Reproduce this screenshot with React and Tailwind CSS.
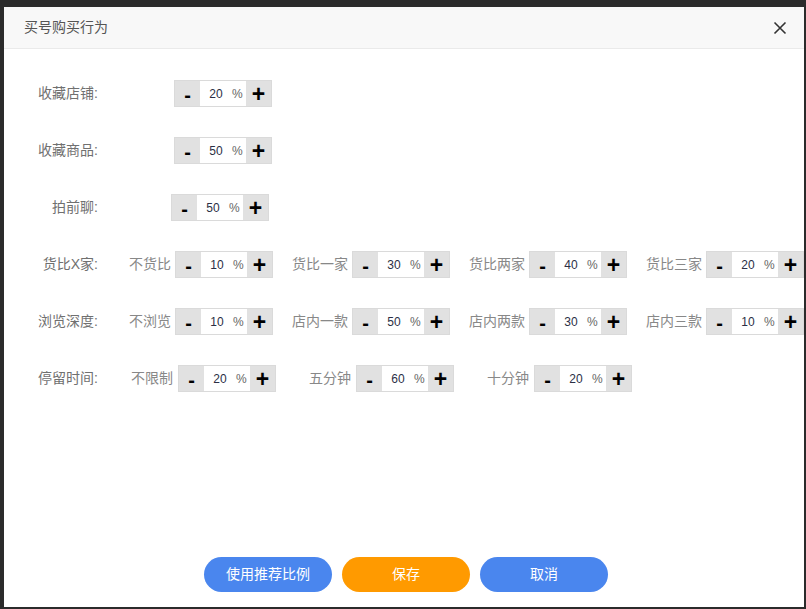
import React from "react";

const font = "font-['Liberation_Sans','Noto_Sans_CJK_SC',sans-serif]";

const Stepper = ({ value }) => (
  <div className="flex h-[27px] border border-[#dadada] shrink-0">
    <div className="w-[25px] bg-[#e1e1e1] flex items-center justify-center text-[20px] font-bold text-black leading-none pt-[3px]">
      -
    </div>
    <div className="w-[46px] bg-white flex items-center text-[12px] leading-none">
      <span className="w-[32px] text-center text-[#2b2f45]">{value}</span>
      <span className="text-[#666]">%</span>
    </div>
    <div className="w-[25px] bg-[#e1e1e1] flex items-center justify-center text-[23px] font-bold text-black leading-none pt-[2px]">
      +
    </div>
  </div>
);

const MainLabel = ({ children }) => (
  <div className="w-[94px] shrink-0 text-right text-[14px] text-[#707070]">{children}</div>
);

const rows = [
  {
    label: "货比X家:",
    items: [
      ["不货比", 10],
      ["货比一家", 30],
      ["货比两家", 40],
      ["货比三家", 20],
    ],
  },
  {
    label: "浏览深度:",
    items: [
      ["不浏览", 10],
      ["店内一款", 50],
      ["店内两款", 30],
      ["店内三款", 10],
    ],
  },
];

const App = () => {
  return (
    <div className={`w-[806px] h-[609px] bg-[#2b2b2b] pt-[7px] pl-[4px] overflow-hidden ${font}`}>
      <div className="w-[800px] h-[600px] bg-white flex flex-col overflow-hidden">
        {/* 标题栏 */}
        <div className="h-[42px] shrink-0 bg-[#f8f8f8] border-b border-[#eaeaea] flex items-center justify-between pl-[20px] pr-[17px]">
          <span className="text-[14px] text-[#555]">买号购买行为</span>
          <svg width="14" height="14" viewBox="0 0 14 14">
            <path d="M1.5 1.5 L12.5 12.5 M12.5 1.5 L1.5 12.5" stroke="#333" strokeWidth="1.6" />
          </svg>
        </div>

        <div className="flex flex-col gap-[30px] pt-[31px]">
          <div className="flex items-center">
            <MainLabel>收藏店铺:</MainLabel>
            <div className="ml-[76px]">
              <Stepper value={20} />
            </div>
          </div>
          <div className="flex items-center">
            <MainLabel>收藏商品:</MainLabel>
            <div className="ml-[76px]">
              <Stepper value={50} />
            </div>
          </div>
          <div className="flex items-center">
            <MainLabel>拍前聊:</MainLabel>
            <div className="ml-[73px]">
              <Stepper value={50} />
            </div>
          </div>

          {rows.map((row) => (
            <div key={row.label} className="flex items-center">
              <MainLabel>{row.label}</MainLabel>
              {row.items.map(([name, v], i) => (
                <div key={name} className="flex items-center">
                  <div
                    className={`${i === 0 ? "w-[77px]" : "w-[79px]"} shrink-0 text-right pr-[4px] text-[14px] text-[#888]`}
                  >
                    {name}
                  </div>
                  <Stepper value={v} />
                </div>
              ))}
            </div>
          ))}

          <div className="flex items-center">
            <MainLabel>停留时间:</MainLabel>
            {[
              ["不限制", 20],
              ["五分钟", 60],
              ["十分钟", 20],
            ].map(([name, v]) => (
              <div key={name} className="flex items-center">
                <div className="w-[80px] shrink-0 text-right pr-[5px] text-[14px] text-[#888]">{name}</div>
                <Stepper value={v} />
              </div>
            ))}
          </div>
        </div>

        <div className="mt-auto pb-[15px] flex justify-center gap-[10px] pl-[4px]">
          <button className="w-[128px] h-[35px] rounded-full bg-[#4a86ee] text-white text-[14px]">
            使用推荐比例
          </button>
          <button className="w-[128px] h-[35px] rounded-full bg-[#ff9a00] text-white text-[14px]">
            保存
          </button>
          <button className="w-[128px] h-[35px] rounded-full bg-[#4a86ee] text-white text-[14px]">
            取消
          </button>
        </div>
      </div>
    </div>
  );
};

export default App;
